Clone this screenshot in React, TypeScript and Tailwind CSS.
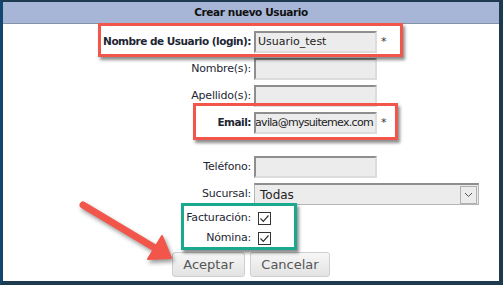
import React from "react";

const font = { fontFamily: "Tahoma, 'DejaVu Sans', Verdana, sans-serif" };

function Field({ label, bold, value, star, right }: { label: string; bold?: boolean; value?: string; star?: boolean; right?: boolean }) {
  return (
    <div className="flex items-center h-[22px]">
      <div
        className={`w-[248px] text-right text-[#1d2733] ${bold ? "font-bold text-[10.5px] tracking-[-0.5px]" : "text-[11px] tracking-[-0.2px]"}`}
      >
        {label}
      </div>
      <div
        className={`ml-[3px] w-[123px] h-[22px] bg-[#ececec] border-2 border-t-[#8e8e8e] border-l-[#8e8e8e] border-b-[#dcdcdc] border-r-[#dcdcdc] flex items-center overflow-hidden whitespace-nowrap text-[11px] text-[#222] px-[2px] ${right ? "justify-end tracking-[-0.7px]" : ""}`}
      >
        <span className="shrink-0">{value}</span>
      </div>
      {star && <span className="ml-[4px] text-[11px] text-[#333]">*</span>}
    </div>
  );
}

function Check({ label }: { label: string }) {
  return (
    <div className="flex items-center h-[20px]">
      <div className="w-[248px] text-right text-[11px] tracking-[-0.2px] text-[#1d2733]">{label}</div>
      <div className="ml-[7px] w-[13px] h-[13px] border border-[#333] bg-white flex items-center justify-center">
        <svg width="11" height="11" viewBox="0 0 11 11">
          <path d="M1.5 5.5 L4.3 8.3 L9.5 2.5" fill="none" stroke="#333" strokeWidth="1.2" />
        </svg>
      </div>
    </div>
  );
}

export default function App() {
  return (
    <div
      style={font}
      className="relative w-[503px] h-[285px] bg-white border-l-[3px] border-t-2 border-r-4 border-b-4 border-l-[#13466e] border-t-[#1d3a4f] border-r-[#1d3a4f] border-b-[#1d3a4f] overflow-hidden"
    >
      {/* HEADER */}
      <div className="h-[22px] bg-[#a7b5d6] border-b border-[#8592a8] flex items-center justify-center text-[10.5px] tracking-[-0.4px] font-bold text-[#111]">
        Crear nuevo Usuario
      </div>

      {/* FORM */}
      <div className="flex flex-col gap-[5px] pt-[7px]">
        <Field label="Nombre de Usuario (login):" bold value="Usuario_test" star />
        <Field label="Nombre(s):" />
        <Field label="Apellido(s):" />
        <Field label="Email:" bold value="avila@mysuitemex.com" star right />
        <div className="h-[12px]" />
        <Field label="Teléfono:" />
        <div className="flex items-center h-[22px]">
          <div className="w-[248px] text-right text-[11px] tracking-[-0.2px] text-[#1d2733]">Sucursal:</div>
          <div className="ml-[3px] w-[225px] h-[22px] bg-[#ececec] border border-[#b5b5b5] border-t-[#8e8e8e] border-t-2 flex items-center justify-between text-[12px] text-[#222]">
            <span className="pl-[5px]">Todas</span>
            <div className="w-[17px] h-[18px] border border-[#b0b0b0] bg-[#ececec] flex items-center justify-center mr-[1px]">
              <svg width="9" height="6" viewBox="0 0 9 6">
                <path d="M1 1 L4.5 4.5 L8 1" fill="none" stroke="#555" strokeWidth="1" />
              </svg>
            </div>
          </div>
        </div>
        <div className="flex flex-col -mt-[2px]">
          <Check label="Facturación:" />
          <Check label="Nómina:" />
        </div>
        <div className="flex gap-[5px] pl-[169px] -mt-[1px]">
          <button className="w-[73px] h-[25px] rounded-[3px] border border-[#cfcfcf] bg-gradient-to-b from-[#f7f7f7] to-[#e3e3e3] text-[13px] text-[#555]">
            Aceptar
          </button>
          <button className="w-[80px] h-[25px] rounded-[3px] border border-[#cfcfcf] bg-gradient-to-b from-[#f7f7f7] to-[#e3e3e3] text-[13px] text-[#555]">
            Cancelar
          </button>
        </div>
      </div>

      {/* ANNOTATIONS */}
      <div className="absolute left-[95px] top-[21px] w-[305px] h-[34px] border-[3px] border-[#f2564b] shadow-[2px_3px_3px_rgba(0,0,0,0.45)]" />
      <div className="absolute left-[190px] top-[101px] w-[205px] h-[37px] border-[3px] border-[#f2564b] shadow-[2px_3px_3px_rgba(0,0,0,0.45)]" />
      <div className="absolute left-[178px] top-[201px] w-[116px] h-[47px] border-[3px] border-[#1aa98f] shadow-[2px_3px_3px_rgba(0,0,0,0.45)]" />
      <svg className="absolute left-0 top-0" width="503" height="285" style={{ filter: "drop-shadow(2px 3px 2px rgba(0,0,0,0.4))" }}>
        <line x1="80" y1="203" x2="152" y2="246" stroke="#f2564b" strokeWidth="7" strokeLinecap="round" />
        <path d="M168 256 L145 257 L159 234 Z" fill="#f2564b" stroke="#f2564b" strokeWidth="2" strokeLinejoin="round" />
      </svg>
    </div>
  );
}
